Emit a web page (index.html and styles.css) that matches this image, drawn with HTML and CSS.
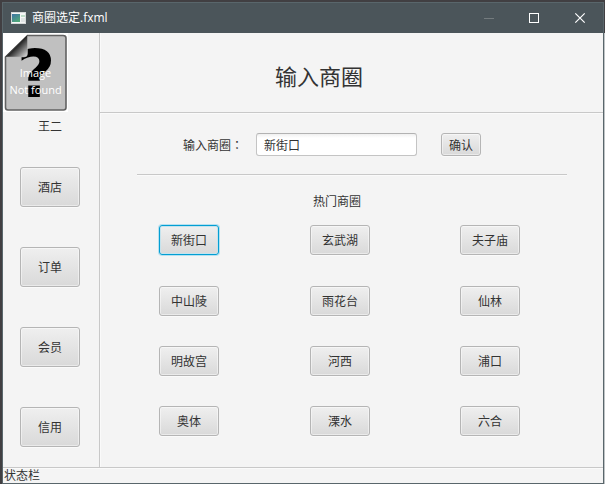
FILE: index.html
```html
<!DOCTYPE html>
<html lang="zh-CN">
<head>
<meta charset="utf-8">
<title>商圈选定.fxml</title>
<link rel="stylesheet" href="styles.css">
</head>
<body>
<div class="window">
  <header class="titlebar">
    <svg class="app-icon" width="15" height="12" viewBox="0 0 15 12">
      <defs><linearGradient id="pane" x1="0" y1="0" x2="0.6" y2="1"><stop offset="0" stop-color="#3e74a6"/><stop offset="1" stop-color="#4fa77a"/></linearGradient></defs>
      <rect width="15" height="12" fill="#d4d8d9"/>
      <rect x="1" y="1" width="13" height="10" fill="#f5f6f6"/>
      <rect x="1" y="2" width="8" height="8" fill="url(#pane)"/>
      <rect x="10" y="3" width="4" height="2" fill="#bdddc8"/>
      <rect x="10" y="6" width="4" height="4" fill="#e0e4e5"/>
    </svg>
    <span class="title">商圈选定.fxml</span>
    <svg class="controls" width="102" height="12" viewBox="0 0 102 12" fill="none">
      <path d="M0 6.5H10" stroke="#747b7e"/>
      <rect x="45.5" y="1.5" width="9" height="9" stroke="#fff"/>
      <path d="M91.3 1.3L100.7 10.7M100.7 1.3L91.3 10.7" stroke="#fff" stroke-width="1.2"/>
    </svg>
  </header>
  <div class="body">
    <aside class="sidebar">
      <div class="avatar">
        <svg class="page" width="65" height="79" viewBox="0 0 65 79">
          <defs>
            <linearGradient id="fold" gradientUnits="userSpaceOnUse" x1="10" y1="9" x2="24" y2="23"><stop offset="0.15" stop-color="#000"/><stop offset="1" stop-color="#d8d8d8"/></linearGradient>
          </defs>
          <rect width="65" height="79" fill="#fff"/>
          <path d="M24.5 2.5H60Q63 2.5 63 5V74.5Q63 77 60.5 77H5Q2.5 77 2.5 74.5V24Z" fill="#c0c0c0" stroke="#626262" stroke-width="1.6"/>
        </svg>
        <span class="question">?</span>
        <svg class="page" width="65" height="79" viewBox="0 0 65 79">
          <path d="M24.5 2.5V20.5Q24.5 24 21 24H2.5Z" fill="url(#fold)" stroke="#bbb" stroke-width=".5"/>
          <path d="M24.5 2.5L2.5 24" stroke="#222"/>
        </svg>
        <span class="missing">Image<br>Not found</span>
      </div>
      <div class="user">王二</div>
      <nav class="nav">
        <button class="btn">酒店</button>
        <button class="btn">订单</button>
        <button class="btn">会员</button>
        <button class="btn">信用</button>
      </nav>
    </aside>
    <main class="main">
      <h1 class="heading">输入商圈</h1>
      <div class="form">
        <label class="label" for="area">输入商圈<span class="colon" lang="zh-TW">：</span></label>
        <input class="field" id="area" type="text" value="新街口">
        <button class="btn confirm">确认</button>
      </div>
      <div class="hot">热门商圈</div>
      <div class="areas">
        <button class="btn focused">新街口</button>
        <button class="btn">玄武湖</button>
        <button class="btn">夫子庙</button>
        <button class="btn">中山陵</button>
        <button class="btn">雨花台</button>
        <button class="btn">仙林</button>
        <button class="btn">明故宫</button>
        <button class="btn">河西</button>
        <button class="btn">浦口</button>
        <button class="btn">奥体</button>
        <button class="btn">溧水</button>
        <button class="btn">六合</button>
      </div>
    </main>
  </div>
  <footer class="status">状态栏</footer>
</div>
</body>
</html>
```
FILE: styles.css
```css
* { box-sizing: border-box; }

body {
  margin: 0;
  width: 605px;
  height: 484px;
  overflow: hidden;
  padding: 2px 1px 0 2px;
  background: linear-gradient(#413f42 33px, #bfc3c5 33px) right / 1px 100% no-repeat, #413f42;
  font: 12px/16px "Noto Sans CJK SC", sans-serif;
  color: #333;
}

.window {
  display: flex;
  flex-direction: column;
  height: 482px;
  border: 1px solid #59666b;
  background: #f4f4f4;
}

.titlebar {
  display: flex;
  align-items: center;
  flex: none;
  height: 30px;
  padding: 0 17px 0 8px;
  background: #4b555a;
  color: #fff;
}
.title { margin-left: 6px; font-family: "Open Sans", "Noto Sans CJK SC", sans-serif; }
.controls { margin-left: auto; }

.body { display: flex; flex: 1; min-height: 0; }

.sidebar {
  flex: none;
  width: 97px;
  border-right: 1px solid #c8c8c8;
}
.avatar {
  position: relative;
  width: 65px;
  height: 79px;
  overflow: hidden;
}
.page { position: absolute; left: 0; top: 0; }
.question {
  position: absolute;
  left: 14px;
  top: 1px;
  font: bold 66px/82px "DejaVu Sans", sans-serif;
  color: #000;
}
.missing {
  position: absolute;
  left: 0;
  top: 31px;
  width: 65px;
  text-align: center;
  font: 11px/17px "Open Sans", sans-serif;
  color: #fff;
}
.user { width: 94px; margin-top: 6px; text-align: center; }

.nav {
  display: flex;
  flex-direction: column;
  gap: 40px;
  margin: 33px 0 0 17px;
}
.nav .btn { height: 40px; }

.btn {
  width: 60px;
  height: 30px;
  padding: 0;
  border: 1px solid #b5b5b5;
  border-radius: 3px;
  background: linear-gradient(#efefef, #d9d9d9);
  box-shadow: inset 0 0 0 1px rgba(255, 255, 255, .45), 0 1px 0 #fafafa;
  font: inherit;
  color: #333;
}
.focused {
  border-color: #039ed3;
  box-shadow: 0 0 0 1px #b5e1f0, inset 0 0 0 1px #c5e3ed;
}

.main {
  flex: 1;
  box-shadow: inset 1px 0 0 #fafafa;
}
.heading {
  height: 80px;
  margin: 0;
  padding-right: 65px;
  border-bottom: 1px solid #c8c8c8;
  box-shadow: 0 1px 0 #fafafa;
  text-align: center;
  font-size: 22px;
  font-weight: 400;
  line-height: 84px;
}
.form {
  display: flex;
  width: 430px;
  height: 62px;
  margin-left: 37px;
  padding: 20px 0 0 46px;
  border-bottom: 1px solid #c8c8c8;
  box-shadow: 0 1px 0 #fafafa;
}
.label { width: 73px; line-height: 23px; white-space: nowrap; }
.colon { font-family: "Noto Sans CJK TC", sans-serif; }
.field {
  width: 161px;
  height: 23px;
  margin-right: 24px;
  padding: 0 7px;
  border: 1px solid #c4c4c4;
  border-top-color: #b2b2b2;
  border-radius: 3px;
  background: linear-gradient(#f0f0f0, #fff 4px);
  font: inherit;
  color: #333;
}
.confirm { width: 40px; height: 23px; }
.hot { margin: 18px 0 16px 213px; }
.areas {
  display: grid;
  grid-template-columns: 151px 150px 60px;
  grid-template-rows: 61px 60px 60px 30px;
  margin-left: 59px;
}

.status {
  flex: none;
  height: 16px;
  padding-left: 1px;
  border-top: 1px solid #c8c8c8;
  box-shadow: inset 0 1px 0 #fafafa;
  line-height: 14px;
}
```
